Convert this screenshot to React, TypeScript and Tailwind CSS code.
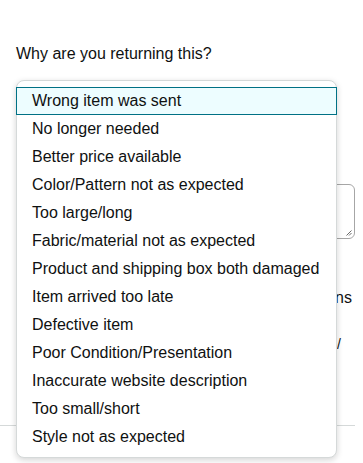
const REASONS = [
  'Wrong item was sent',
  'No longer needed',
  'Better price available',
  'Color/Pattern not as expected',
  'Too large/long',
  'Fabric/material not as expected',
  'Product and shipping box both damaged',
  'Item arrived too late',
  'Defective item',
  'Poor Condition/Presentation',
  'Inaccurate website description',
  'Too small/short',
  'Style not as expected',
];

function ResizeHandle() {
  return (
    <svg className="absolute bottom-[2px] right-[2px]" width="7" height="7" viewBox="0 0 7 7" aria-hidden="true">
      <path d="M6.5 1.5 L1.5 6.5 M6.5 4 L4 6.5" stroke="#6b6b6b" strokeWidth="1" fill="none" />
    </svg>
  );
}

export default function App() {
  const selected = 0;

  return (
    <div
      className="relative h-[463px] w-[363px] overflow-hidden bg-white text-[#0f1111]"
      style={{ fontFamily: '"Liberation Sans", Arial, sans-serif' }}
    >
      {/* form underneath the open dropdown */}
      <div className="pl-4 pr-2 pt-[42px]">
        <h2 className="text-[16px] leading-6">Why are you returning this?</h2>
        <div className="relative mt-[118px] h-[55px] rounded-[6px] border border-[#a6a6a6]">
          <ResizeHandle />
        </div>
        <p className="mt-[49px] text-right text-[16px] leading-5 pr-[3px]">instructions</p>
        <p className="mt-[26px] text-right text-[14px] leading-5 pr-[14px]">/</p>
      </div>
      <div className="mt-[71px] h-px w-[355px] bg-[#d5d9d9]" />

      {/* open listbox */}
      <ul
        role="listbox"
        className="absolute left-4 top-[80px] w-[321px] rounded-lg border border-[#d5d9d9] bg-white py-[6px] shadow-[0_2px_6px_rgba(15,17,17,0.18)]"
      >
        {REASONS.map((reason, i) => (
          <li
            key={reason}
            role="option"
            aria-selected={i === selected}
            className={
              i === selected
                ? '-mx-px flex h-7 items-center border border-[#007185] bg-[#edfdff] pl-[15px] text-[16px]'
                : '-mx-px flex h-7 items-center border border-transparent pl-[15px] text-[16px]'
            }
          >
            {reason}
          </li>
        ))}
      </ul>
    </div>
  );
}
